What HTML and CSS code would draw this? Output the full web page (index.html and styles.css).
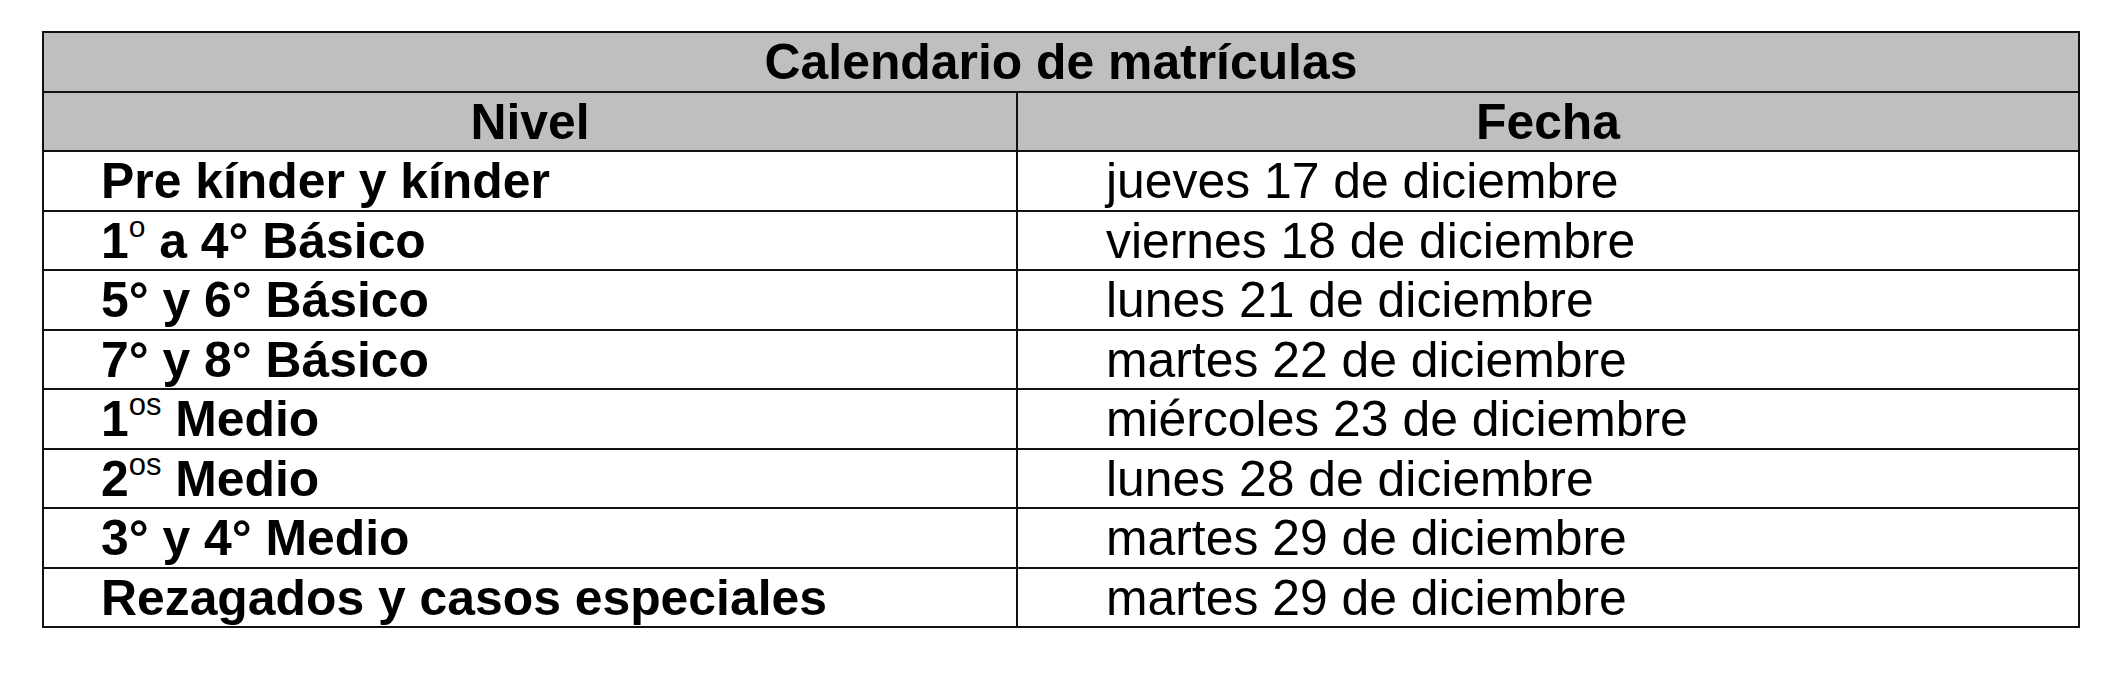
FILE: index.html
```html
<!DOCTYPE html>
<html lang="es">
<head>
<meta charset="utf-8">
<title>Calendario de matrículas</title>
<link rel="stylesheet" href="styles.css">
</head>
<body>
<table class="cal">
  <colgroup>
    <col class="col-nivel">
    <col class="col-fecha">
  </colgroup>
  <thead>
    <tr class="head"><th colspan="2">Calendario de matrículas</th></tr>
    <tr class="head"><th>Nivel</th><th>Fecha</th></tr>
  </thead>
  <tbody>
    <tr><td class="nivel">Pre kínder y kínder</td><td class="fecha">jueves 17 de diciembre</td></tr>
    <tr><td class="nivel">1<sup class="ord">o</sup> a 4° Básico</td><td class="fecha">viernes 18 de diciembre</td></tr>
    <tr><td class="nivel">5° y 6° Básico</td><td class="fecha">lunes 21 de diciembre</td></tr>
    <tr><td class="nivel">7° y 8° Básico</td><td class="fecha">martes 22 de diciembre</td></tr>
    <tr><td class="nivel">1<sup class="os">os</sup> Medio</td><td class="fecha">miércoles 23 de diciembre</td></tr>
    <tr><td class="nivel">2<sup class="os">os</sup> Medio</td><td class="fecha">lunes 28 de diciembre</td></tr>
    <tr><td class="nivel">3° y 4° Medio</td><td class="fecha">martes 29 de diciembre</td></tr>
    <tr><td class="nivel">Rezagados y casos especiales</td><td class="fecha">martes 29 de diciembre</td></tr>
  </tbody>
</table>
</body>
</html>
```

FILE: styles.css
```css
html, body {
  margin: 0;
  padding: 0;
  background: #ffffff;
}

body {
  padding: 31px 0 0 42px;
  font-family: "Liberation Sans", Arial, sans-serif;
  color: #000000;
}

.cal {
  border-collapse: collapse;
  width: 2036px;
  table-layout: fixed;
  font-size: 49.85px;
}

.col-nivel { width: 974px; }
.col-fecha { width: 1062px; }

.cal th,
.cal td {
  border: 2px solid #111111;
  height: 59.5px;
  box-sizing: border-box;
  padding: 2px 0 0 0;
  line-height: 55px;
  vertical-align: top;
  white-space: nowrap;
}

.head th {
  background: #bfbfbf;
  font-weight: bold;
  text-align: center;
}

.nivel {
  font-weight: bold;
  padding-left: 57px !important;
}

.fecha {
  font-weight: normal;
  padding-left: 88px !important;
}

sup {
  line-height: 0;
  position: relative;
}

.ord {
  font-size: 30px;
  font-weight: normal;
  vertical-align: 0;
  top: -21px;
}

.os {
  font-size: 31px;
  font-weight: normal;
  vertical-align: 0;
  top: -21px;
}
```
